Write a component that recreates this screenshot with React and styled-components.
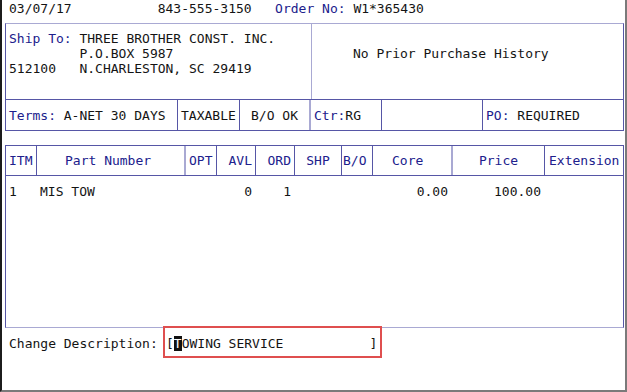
import React from "react";
import styled, { createGlobalStyle } from "styled-components";

const DARK = "#5656a6";
const SOFT = "#a9a9d3";
const NAVY = "#20208c";
const INK = "#141414";
const COLS = "31px 149px 31px 39px 39px 47px 31px 80px 92px 1fr";

const Global = createGlobalStyle`
  html, body { margin: 0; padding: 0; background: #fff; }
  body { font-family: "DejaVu Sans Mono", "Liberation Mono", monospace; font-size: 13px; }
`;

const Screen = styled.div`
  box-sizing: border-box;
  width: 627px;
  height: 392px;
  border-left: 2px solid #1c1c1c;
  border-right: 2px solid #7a7a7a;
  border-bottom: 2px solid #7a7a7a;
  padding: 0 1px 0 3px;
  display: flex;
  flex-direction: column;
  font-family: "DejaVu Sans Mono", monospace;
  font-size: 13px;
  line-height: 15px;
  color: ${INK};
  background: #fff;
  overflow: hidden;
`;

const Label = styled.span`
  color: ${NAVY};
`;

const TopLine = styled.div`
  height: 23px;
  box-sizing: border-box;
  padding: 1px 0 0 4px;
  white-space: pre;
`;

const Panel = styled.div`
  border: 1px solid ${DARK};
  border-top-color: ${SOFT};
  display: flex;
  flex-direction: column;
`;

const ShipRow = styled.div`
  box-sizing: border-box;
  height: 76px;
  display: grid;
  grid-template-columns: 305px 1fr;
  border-bottom: 1px solid ${DARK};
`;

const ShipCell = styled.div`
  padding: 7px 0 0 3px;
  display: flex;
  flex-direction: column;
`;

const ShipLine = styled.div`
  height: 15px;
  white-space: pre;
`;

const HistoryCell = styled.div`
  border-left: 1px solid ${SOFT};
  padding: 22px 0 0 41px;
  white-space: pre;
`;

const TermsRow = styled.div`
  height: 30px;
  display: grid;
  grid-template-columns: 172px 62px 71px 71px 101px 1fr;
`;

const TermCell = styled.div`
  box-sizing: border-box;
  display: flex;
  align-items: center;
  padding-left: ${(p) => p.$pad}px;
  white-space: pre;
  border-right: ${(p) => (p.$last ? "none" : p.$soft ? `2px solid ${SOFT}` : `1px solid ${DARK}`)};
`;

const Table = styled.div`
  box-sizing: border-box;
  margin-top: 14px;
  height: 183px;
  border: 1px solid ${DARK};
  border-bottom-color: ${SOFT};
  display: flex;
  flex-direction: column;
`;

const HeaderRow = styled.div`
  box-sizing: border-box;
  height: 30px;
  display: grid;
  grid-template-columns: ${COLS};
  border-bottom: 1px solid ${DARK};
`;

const HeadCell = styled.div`
  box-sizing: border-box;
  display: flex;
  align-items: center;
  color: ${NAVY};
  white-space: pre;
  justify-content: ${(p) => (p.$align === "right" ? "flex-end" : p.$align === "center" ? "center" : "flex-start")};
  padding-left: ${(p) => p.$pl || 0}px;
  padding-right: ${(p) => p.$pr || 0}px;
  border-right: ${(p) => (p.$last ? "none" : p.$soft ? `2px solid ${SOFT}` : `1px solid ${DARK}`)};
`;

const Body = styled.div`
  flex: 1;
  padding-top: 8px;
`;

const BodyRow = styled.div`
  display: grid;
  grid-template-columns: ${COLS};
  height: 15px;
`;

const BodyCell = styled.div`
  box-sizing: border-box;
  display: flex;
  white-space: pre;
  justify-content: ${(p) => (p.$align === "right" ? "flex-end" : "flex-start")};
  padding-left: ${(p) => p.$pl || 0}px;
  padding-right: ${(p) => p.$pr || 0}px;
  border-right: ${(p) => (p.$soft ? "2px" : "1px")} solid transparent;
`;

const DescRow = styled.div`
  margin-top: -2px;
  height: 32px;
  display: flex;
  align-items: center;
  padding-left: 4px;
`;

const DescLabel = styled.span`
  width: 154px;
  padding-top: 3px;
  white-space: pre;
`;

const Field = styled.div`
  box-sizing: border-box;
  width: 219px;
  height: 32px;
  border: 2px solid #df4f4f;
  padding: 3px 0 0 1px;
  display: flex;
  align-items: center;
  white-space: pre;
`;

const Cursor = styled.span`
  background: #111;
  color: #fff;
`;

const headers = [
  { t: "ITM", pl: 3 },
  { t: "Part Number", pl: 28, soft: true },
  { t: "OPT", pl: 3 },
  { t: "AVL", align: "right", pr: 3 },
  { t: "ORD", align: "right", pr: 3 },
  { t: "SHP", align: "center" },
  { t: "B/O", pl: 1 },
  { t: "Core", pl: 19, soft: true },
  { t: "Price", align: "center" },
  { t: "Extension", pl: 4, last: true },
];

const rows = [
  ["1", "MIS TOW", "", "0", "1", "", "", "0.00", "100.00", ""],
];

const bodyCols = [
  { pl: 3 },
  { pl: 3, soft: true },
  { pl: 3 },
  { align: "right", pr: 3 },
  { align: "right", pr: 3 },
  {},
  {},
  { align: "right", pr: 3, soft: true },
  { align: "right", pr: 3 },
  {},
];

export default function App() {
  return (
    <>
      <Global />
      <Screen>
        <TopLine>
          {"03/07/17           843-555-3150   "}
          <Label>Order No:</Label>
          {" W1*365430"}
        </TopLine>
        <Panel>
          <ShipRow>
            <ShipCell>
              <ShipLine>
                <Label>Ship To:</Label>
                {" THREE BROTHER CONST. INC."}
              </ShipLine>
              <ShipLine>{"         P.O.BOX 5987"}</ShipLine>
              <ShipLine>{"512100   N.CHARLESTON, SC 29419"}</ShipLine>
            </ShipCell>
            <HistoryCell>No Prior Purchase History</HistoryCell>
          </ShipRow>
          <TermsRow>
            <TermCell $pad={3}>
              <Label>Terms:</Label>
              {" A-NET 30 DAYS"}
            </TermCell>
            <TermCell $pad={3}>TAXABLE</TermCell>
            <TermCell $pad={11} $soft>B/O OK</TermCell>
            <TermCell $pad={3}>
              <Label>Ctr:</Label>RG
            </TermCell>
            <TermCell $pad={3} />
            <TermCell $pad={3} $last>
              <Label>PO:</Label>
              {" REQUIRED"}
            </TermCell>
          </TermsRow>
        </Panel>
        <Table>
          <HeaderRow>
            {headers.map((h) => (
              <HeadCell key={h.t} $align={h.align} $pl={h.pl} $pr={h.pr} $soft={h.soft} $last={h.last}>
                {h.t}
              </HeadCell>
            ))}
          </HeaderRow>
          <Body>
            {rows.map((r, i) => (
              <BodyRow key={i}>
                {r.map((v, j) => (
                  <BodyCell key={j} $align={bodyCols[j].align} $pl={bodyCols[j].pl} $pr={bodyCols[j].pr} $soft={bodyCols[j].soft}>
                    {v}
                  </BodyCell>
                ))}
              </BodyRow>
            ))}
          </Body>
        </Table>
        <DescRow>
          <DescLabel>Change Description:</DescLabel>
          <Field>
            {"["}
            <Cursor>T</Cursor>
            {"OWING SERVICE           ]"}
          </Field>
        </DescRow>
      </Screen>
    </>
  );
}
